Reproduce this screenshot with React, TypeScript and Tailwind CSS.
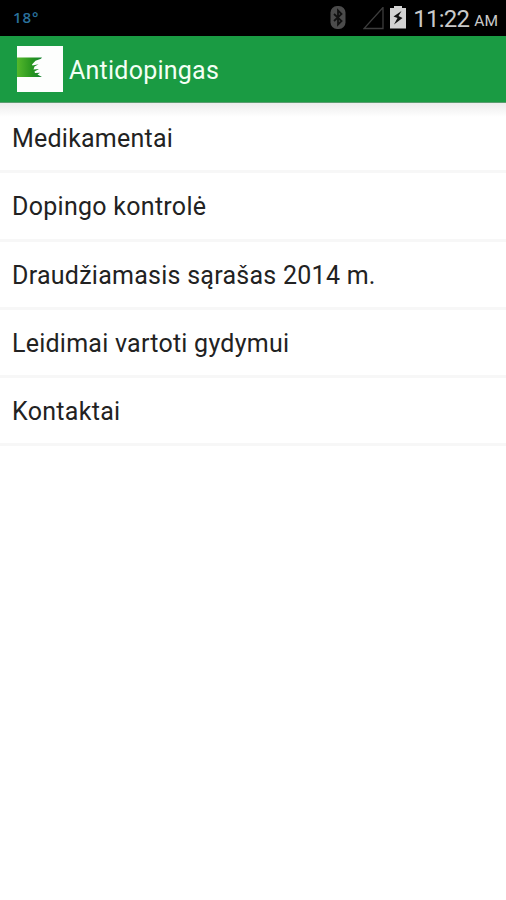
const items = [
  { label: 'Medikamentai', tracking: 'tracking-[0.22px]' },
  { label: 'Dopingo kontrolė', tracking: 'tracking-[0.28px]' },
  { label: 'Draudžiamasis sąrašas 2014 m.', tracking: 'tracking-[0.26px]' },
  { label: 'Leidimai vartoti gydymui', tracking: 'tracking-[0.24px]' },
  { label: 'Kontaktai', tracking: 'tracking-[0.3px]' },
];

function StatusBar() {
  return (
    <header className="flex h-9 items-center bg-black pl-[13px] pr-2">
      <span className="pb-[3px] font-['Open_Sans',sans-serif] text-[15px] font-semibold leading-8 tracking-[0.9px] text-[#2a719c]">
        18°
      </span>
      <div className="ml-auto flex items-center">
        <svg className="mr-[17px] h-6 w-4" viewBox="0 0 16 24" fill="none">
          <rect x="0.5" y="0" width="15" height="23" rx="6.5" fill="#4b4b4b" />
          <path d="M4 8L11.5 15L8 18.5V4.5L11.5 8L4 15" stroke="#111" strokeWidth="1.8" />
        </svg>
        <svg className="mr-[6px] h-[23px] w-[21px]" viewBox="0 0 21 23" fill="none">
          <path d="M1 21.5H20V0.5Z" stroke="#3d3d3d" strokeWidth="1.3" />
        </svg>
        <svg className="mr-[7px] h-6 w-4" viewBox="0 0 16 24">
          <path d="M4 0H12V2H16V22.5H0V2H4Z" fill="#d2d2d2" />
          <path d="M11.5 5L3.5 10.5L7.5 12L4 18.5L12.5 12L8.5 10Z" fill="#111" />
        </svg>
        <span className="mt-px font-[Roboto,sans-serif] text-[24px] leading-8 tracking-[-0.75px] text-[#c9c9c9]">11:22</span>
        <span className="ml-[5px] mt-[6px] font-[Roboto,sans-serif] text-[15.5px] leading-[30px] text-[#c9c9c9]">AM</span>
      </div>
    </header>
  );
}

function Logo() {
  return (
    <svg className="h-[46px] w-[46px]" viewBox="0 0 46 46">
      <defs>
        <linearGradient id="flag" x1="0" x2="1">
          <stop offset="0" stopColor="#55b82b" />
          <stop offset="0.6" stopColor="#27951f" />
          <stop offset="1" stopColor="#168333" />
        </linearGradient>
      </defs>
      <rect width="46" height="46" fill="#fdfefd" />
      <path
        d="M0 11.5H25L24 12.8L18.5 14.8L15 18.5L15.5 19.5L21.5 18.2L17.5 20.5L16.5 23.5L22 23L17.5 25.5L18 27L23 26.8L20.5 28.5L25 31H0Z"
        fill="url(#flag)"
      />
    </svg>
  );
}

export default function App() {
  return (
    <div className="min-h-[900px] w-full bg-white">
      <StatusBar />
      <div className="flex h-[67px] items-center border-b border-[#5b9c70] bg-[#1a9b43] pl-[17px]">
        <Logo />
        <h1 className="ml-[6px] mt-1 font-[Roboto,sans-serif] text-[25px] leading-[30px] tracking-[0.24px] text-[#f4fff5]">
          Antidopingas
        </h1>
      </div>
      <main className="bg-linear-to-b from-[#ececec] to-white to-[14px] pt-[2px]">
        <ul>
          {items.map((item) => (
            <li
              key={item.label}
              className="flex h-[68.3px] items-center border-b-[3px] border-[#f7f7f7] pl-3 pt-[3px]"
            >
              <span className={`font-[Roboto,sans-serif] text-[25px] leading-[30px] text-[#222222] ${item.tracking}`}>
                {item.label}
              </span>
            </li>
          ))}
        </ul>
      </main>
    </div>
  );
}
